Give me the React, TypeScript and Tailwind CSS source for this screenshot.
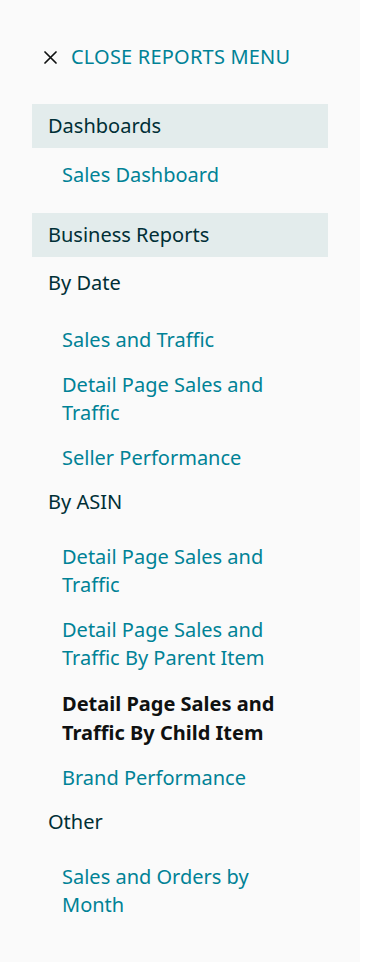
import React from "react";

const font = { fontFamily: '"Noto Sans", "Open Sans", sans-serif' };

function Link({ children }: { children: React.ReactNode }) {
  return (
    <div className="pl-[30px] pr-[30px] text-[20px] leading-[28px] text-[#008296]">{children}</div>
  );
}

function Sub({ children, className = "" }: { children: React.ReactNode; className?: string }) {
  return (
    <div className={"pl-4 text-[20px] leading-[28px] text-[#002f36] " + className}>{children}</div>
  );
}

function Band({ children, className = "" }: { children: React.ReactNode; className?: string }) {
  return (
    <div className={"h-[44px] bg-[#e3ecec] pl-4 flex items-center text-[20px] text-[#002f36] " + className}>
      {children}
    </div>
  );
}

export default function App() {
  return (
    <div className="flex min-h-[962px] bg-white" style={font}>
      <div className="w-[360px] bg-[#fafafa] px-8 pt-[43px] pb-10">
        <div className="flex items-center h-[28px] pl-3 gap-[14px]">
          <svg width="13" height="13" viewBox="0 0 13 13" className="shrink-0">
            <path d="M1 1L12 12M12 1L1 12" stroke="#0f1111" strokeWidth="1.7" strokeLinecap="round" />
          </svg>
          <span className="text-[20px] text-[#008296] tracking-[0.2px]">CLOSE REPORTS MENU</span>
        </div>

        <Band className="mt-[33px]">Dashboards</Band>
        <div className="mt-[13px]">
          <Link>Sales Dashboard</Link>
        </div>

        <Band className="mt-[24px]">Business Reports</Band>
        <Sub className="mt-[12px]">By Date</Sub>
        <div className="mt-[29px] flex flex-col gap-[17px]">
          <Link>Sales and Traffic</Link>
          <Link>Detail Page Sales and Traffic</Link>
          <Link>Seller Performance</Link>
        </div>
        <Sub className="mt-[16px]">By ASIN</Sub>
        <div className="mt-[27px] flex flex-col gap-[17px]">
          <Link>Detail Page Sales and Traffic</Link>
          <Link>Detail Page Sales and Traffic By Parent Item</Link>
          <div className="pl-[30px] pr-[30px] text-[20px] leading-[29px] font-bold text-[#0f1111]">
            Detail Page Sales and Traffic By Child Item
          </div>
          <Link>Brand Performance</Link>
        </div>
        <Sub className="mt-[16px]">Other</Sub>
        <div className="mt-[27px] flex flex-col gap-[17px]">
          <Link>Sales and Orders by Month</Link>
        </div>
      </div>
      <div className="flex-1 bg-white" />
    </div>
  );
}
